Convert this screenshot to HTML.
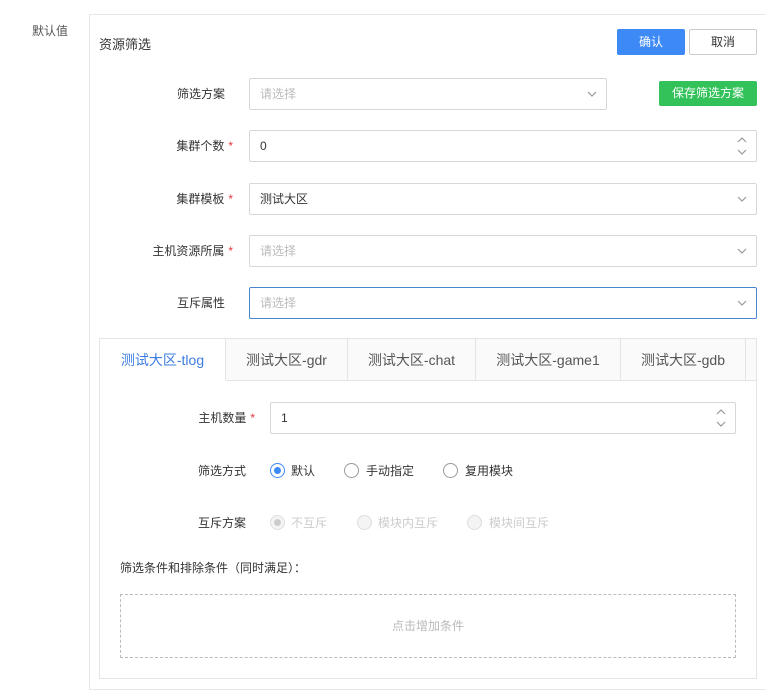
<!DOCTYPE html>
<html><head><meta charset="utf-8"><style>
*{box-sizing:border-box;margin:0;padding:0}
body{width:766px;height:692px;background:#fff;font-family:"Liberation Sans","Noto Sans CJK SC",sans-serif;font-size:12px;color:#333;position:relative;overflow:hidden}
.a{position:absolute}
.lbl{position:absolute;text-align:right;width:130px;font-size:12px;color:#333;line-height:16px}
.star{color:#e4393c;margin-left:4px}
.inp{position:absolute;border:1px solid #d7d7d7;border-radius:2px;height:32px;line-height:30px;padding-left:10px;font-size:12px;color:#333;background:#fff}
.ph{color:#bbb}
.chev{position:absolute;right:9px;top:11px}
.tab{position:absolute;top:0;height:42px;line-height:42px;text-align:center;font-size:14px;color:#555;border-right:1px solid #e4e4e4;border-bottom:1px solid #e4e4e4;background:#fafafa}
.radio{position:absolute;width:15px;height:15px;border:1px solid #999;border-radius:50%;background:#fff}
.rt{position:absolute;font-size:12px;line-height:16px}
</style></head><body>
<div class="a" style="left:32px;top:22px;font-size:12px;color:#555">默认值</div>
<div class="a" style="left:89px;top:14px;width:690px;height:676px;border:1px solid #e8e8e8"></div>
<div class="a" style="left:99px;top:34px;font-size:13px;color:#333">资源筛选</div>
<div class="a" style="left:617px;top:29px;width:68px;height:26px;background:#3d8af7;border-radius:2px;color:#fff;text-align:center;line-height:26px">确认</div>
<div class="a" style="left:689px;top:29px;width:68px;height:26px;border:1px solid #ccc;border-radius:2px;color:#333;text-align:center;line-height:24px">取消</div>

<div class="lbl" style="left:95px;top:86px">筛选方案</div>
<div class="inp" style="left:249px;top:78px;width:358px"><span class="ph">请选择</span><svg class="chev" width="10" height="8"><path d="M1 2l4 4 4-4" fill="none" stroke="#999" stroke-width="1.2"/></svg></div>
<div class="a" style="left:659px;top:81px;width:98px;height:25px;background:#33c25a;border-radius:2px;color:#fff;text-align:center;line-height:25px">保存筛选方案</div>

<div class="lbl" style="left:103px;top:138px">集群个数<span class="star">*</span></div>
<div class="inp" style="left:249px;top:130px;width:508px">0<svg class="a" style="right:9px;top:5px" width="10" height="20"><path d="M1 6l4-4 4 4M1 14l4 4 4-4" fill="none" stroke="#999" stroke-width="1.2"/></svg></div>

<div class="lbl" style="left:103px;top:191px">集群模板<span class="star">*</span></div>
<div class="inp" style="left:249px;top:183px;width:508px">测试大区<svg class="chev" width="10" height="8"><path d="M1 2l4 4 4-4" fill="none" stroke="#999" stroke-width="1.2"/></svg></div>

<div class="lbl" style="left:103px;top:243px">主机资源所属<span class="star">*</span></div>
<div class="inp" style="left:249px;top:235px;width:508px"><span class="ph">请选择</span><svg class="chev" width="10" height="8"><path d="M1 2l4 4 4-4" fill="none" stroke="#999" stroke-width="1.2"/></svg></div>

<div class="lbl" style="left:95px;top:295px">互斥属性</div>
<div class="inp" style="left:249px;top:287px;width:508px;border-color:#4a86d0"><span class="ph">请选择</span><svg class="chev" width="10" height="8"><path d="M1 2l4 4 4-4" fill="none" stroke="#999" stroke-width="1.2"/></svg></div>

<div class="a" style="left:99px;top:338px;width:658px;height:341px;border:1px solid #e4e4e4;overflow:hidden">
 <div class="tab" style="left:0;width:126px;background:#fff;border-bottom-color:#fff;color:#3d7ee0">测试大区-tlog</div>
 <div class="tab" style="left:126px;width:122px">测试大区-gdr</div>
 <div class="tab" style="left:248px;width:128px">测试大区-chat</div>
 <div class="tab" style="left:376px;width:145px">测试大区-game1</div>
 <div class="tab" style="left:521px;width:125px">测试大区-gdb</div>
 <div class="tab" style="left:646px;width:20px"></div>
</div>

<div class="lbl" style="left:125px;top:410px">主机数量<span class="star">*</span></div>
<div class="inp" style="left:270px;top:402px;width:466px;height:32px">1<svg class="a" style="right:9px;top:5px" width="10" height="20"><path d="M1 6l4-4 4 4M1 14l4 4 4-4" fill="none" stroke="#999" stroke-width="1.2"/></svg></div>

<div class="lbl" style="left:116px;top:463px">筛选方式</div>
<div class="radio" style="left:270px;top:463px;border-color:#3d8af7"><div class="a" style="left:3px;top:3px;width:7px;height:7px;border-radius:50%;background:#3d8af7"></div></div>
<div class="rt" style="left:291px;top:463px">默认</div>
<div class="radio" style="left:344px;top:463px"></div>
<div class="rt" style="left:366px;top:463px">手动指定</div>
<div class="radio" style="left:443px;top:463px"></div>
<div class="rt" style="left:465px;top:463px">复用模块</div>

<div class="lbl" style="left:116px;top:515px">互斥方案</div>
<div class="radio" style="left:270px;top:515px;border-color:#ddd;background:#f4f4f4"><div class="a" style="left:3px;top:3px;width:7px;height:7px;border-radius:50%;background:#ccc"></div></div>
<div class="rt" style="left:291px;top:515px;color:#ccc">不互斥</div>
<div class="radio" style="left:357px;top:515px;border-color:#ddd;background:#f4f4f4"></div>
<div class="rt" style="left:378px;top:515px;color:#ccc">模块内互斥</div>
<div class="radio" style="left:467px;top:515px;border-color:#ddd;background:#f4f4f4"></div>
<div class="rt" style="left:489px;top:515px;color:#ccc">模块间互斥</div>

<div class="a" style="left:120px;top:559px;font-size:12px">筛选条件和排除条件（同时满足）：</div>
<div class="a" style="left:120px;top:594px;width:616px;height:64px;border:1px dashed #bbb;text-align:center;line-height:62px;color:#bbb">点击增加条件</div>
</body></html>
